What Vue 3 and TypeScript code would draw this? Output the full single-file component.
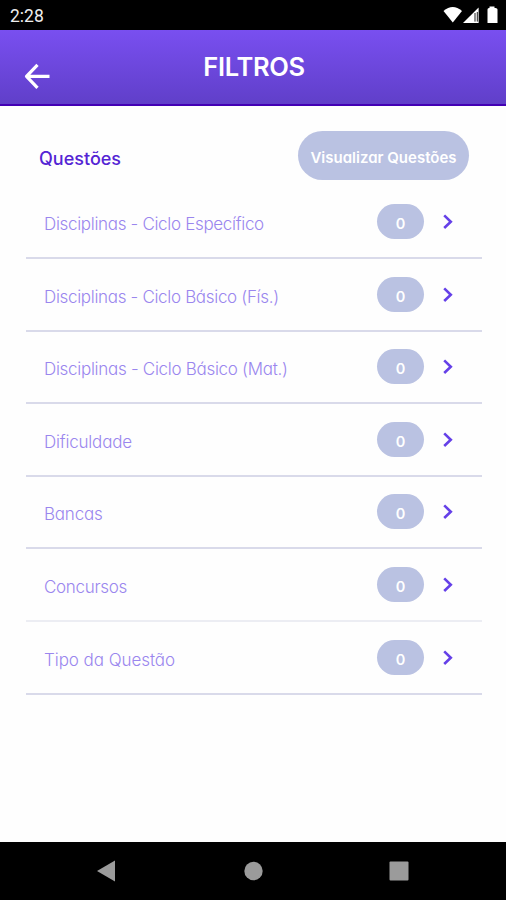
<script setup lang="ts">
interface FilterItem {
  label: string
  count: number
  spacing: number
}

const filters: FilterItem[] = [
  { label: 'Disciplinas - Ciclo Específico', count: 0, spacing: -0.32 },
  { label: 'Disciplinas - Ciclo Básico (Fís.)', count: 0, spacing: -0.32 },
  { label: 'Disciplinas - Ciclo Básico (Mat.)', count: 0, spacing: -0.29 },
  { label: 'Dificuldade', count: 0, spacing: -0.2 },
  { label: 'Bancas', count: 0, spacing: -0.2 },
  { label: 'Concursos', count: 0, spacing: -0.3 },
  { label: 'Tipo da Questão', count: 0, spacing: -0.06 },
]
</script>

<template>
  <div class="screen">
    <div class="status-bar">
      <span class="clock">2:28</span>
      <svg class="status-icons" width="60" height="20" viewBox="0 0 60 20">
        <path d="M0.500 5Q9.800 -3 19 5L9.800 16.500Z" fill="#fff" />
        <path d="M20 17L35.600 1.500V17Z" fill="#fff" />
        <path d="M32 7V15.600M34.300 6V15.600" stroke="#222" stroke-width="1" />
        <path d="M46.500 0.500H51.500V2H52.500Q54.500 2 54.500 3.500V17H44.500V3.500Q44.500 2 46 2H46.500Z" fill="#fff" />
      </svg>
    </div>

    <header class="app-bar">
      <button class="back" aria-label="Voltar">
        <svg width="26" height="26" viewBox="0 0 26 26" fill="none" stroke="#fff" stroke-width="3.200" stroke-linejoin="round">
          <path d="M25.500 13.300H3M13.500 1.800L2.500 13.300L13.500 24.800" />
        </svg>
      </button>
      <h1>FILTROS</h1>
    </header>

    <main>
      <div class="heading">
        <h2>Questões</h2>
        <button class="view"><span>Visualizar Questões</span></button>
      </div>
      <ul>
        <li v-for="item in filters" :key="item.label">
          <span class="label" :style="{ letterSpacing: item.spacing + 'px' }">{{ item.label }}</span>
          <span class="badge">{{ item.count }}</span>
          <svg class="chevron" width="10" height="16" viewBox="0 0 10 16" fill="none" stroke="#6540e8" stroke-width="2.600">
            <path d="M1.200 1.400L7.800 7.700L1.200 14" />
          </svg>
        </li>
      </ul>
    </main>

    <nav class="nav-bar">
      <svg width="20" height="24" viewBox="0 0 20 24"><path d="M1 12L19 1.500V22.500Z" fill="#9b9b9b" /></svg>
      <svg width="20" height="24" viewBox="0 0 20 24"><circle cx="10.500" cy="12" r="9.200" fill="#9b9b9b" /></svg>
      <svg width="20" height="24" viewBox="0 0 20 24"><rect x="0.500" y="2.500" width="19" height="19" rx="1" fill="#9b9b9b" /></svg>
    </nav>
  </div>
</template>

<style>
body {
  margin: 0;
}
</style>

<style scoped>
.screen {
  width: 506px;
  height: 900px;
  display: flex;
  flex-direction: column;
  overflow: hidden;
  background: #fefefe;
  font-family: Inter, "Liberation Sans", sans-serif;
  font-feature-settings: "cv11", "ss03";
}

.status-bar {
  box-sizing: border-box;
  height: 30px;
  flex: none;
  padding: 6px 3px 0 10px;
  display: flex;
  justify-content: space-between;
  background: #000;
}

.clock {
  font: 400 17.500px/20px Roboto, sans-serif;
  color: #eee;
}

.app-bar {
  box-sizing: border-box;
  height: 76px;
  flex: none;
  display: grid;
  grid-template-columns: 80px 1fr 80px;
  border-bottom: 2px solid #4300b4;
  background: linear-gradient(#794ff0, #603fc9);
}

button {
  border: 0;
  font: inherit;
}

.back {
  padding: 33px 0 0 24px;
  display: flex;
  align-items: flex-start;
  background: none;
}

h1 {
  margin: 21px 0 0 2px;
  text-align: center;
  font-size: 25.500px;
  line-height: 32px;
  font-weight: 600;
  letter-spacing: -0.350px;
  color: #fff;
}

main {
  flex: 1;
  padding: 25px 24px 0 26px;
}

.heading {
  height: 49px;
  padding: 0 13px;
  display: flex;
  align-items: center;
  justify-content: space-between;
}

h2 {
  margin: 5px 0 0;
  font-size: 18px;
  font-weight: 500;
  color: #5424d4;
}

.view {
  width: 171px;
  height: 49px;
  padding: 4px 0 0;
  border-radius: 25px;
  background: #bac2e2;
  color: #fff;
  font-size: 15px;
  font-weight: 600;
  white-space: nowrap;
}

ul {
  margin: 6.400px 0 0;
  padding: 0;
  list-style: none;
}

li {
  box-sizing: border-box;
  height: 72.600px;
  padding: 17.600px 29px 0 18px;
  display: flex;
  align-items: flex-start;
  border-bottom: 2px solid #d9daea;
}

li:nth-child(6) {
  border-bottom-color: #ecedf3;
}

.label {
  flex: 1;
  padding-top: 8px;
  font-size: 17px;
  line-height: 24px;
  font-weight: 300;
  color: #9a86ee;
  white-space: nowrap;
}

.badge {
  box-sizing: border-box;
  width: 47px;
  height: 35px;
  padding-top: 4px;
  border-radius: 18px;
  background: #bac2e2;
  color: #fff;
  font-size: 14.500px;
  line-height: 32px;
  font-weight: 600;
  text-align: center;
}

.chevron {
  margin: 10px 0 0 19px;
}

.nav-bar {
  height: 58px;
  flex: none;
  box-sizing: border-box;
  padding: 17px 97px 0 96px;
  display: flex;
  justify-content: space-between;
  background: #000;
}
</style>
